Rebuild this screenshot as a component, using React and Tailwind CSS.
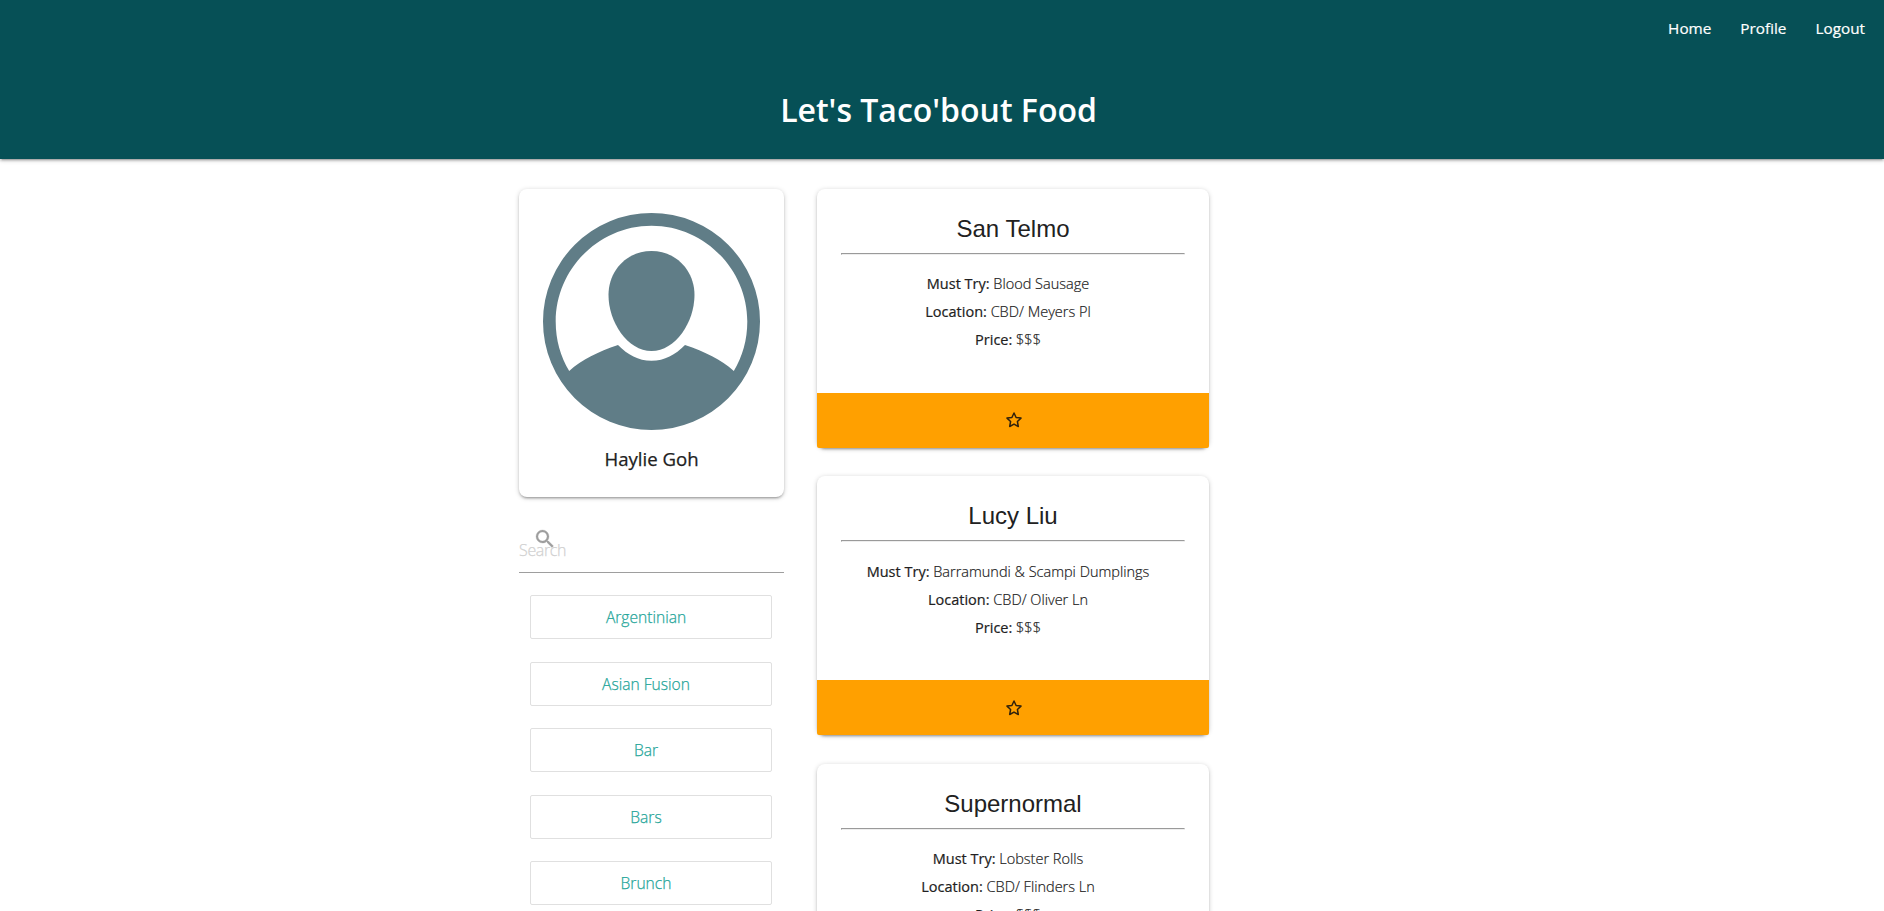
const CARD_SHADOW =
  "shadow-[0_2px_2px_0_rgba(0,0,0,0.14),0_3px_1px_-2px_rgba(0,0,0,0.12),0_1px_5px_0_rgba(0,0,0,0.2)]";

const cuisines = ["Argentinian", "Asian Fusion", "Bar", "Bars", "Brunch"];

const restaurants = [
  { name: "San Telmo", dish: "Blood Sausage", location: "CBD/ Meyers Pl", price: "$$$" },
  { name: "Lucy Liu", dish: "Barramundi & Scampi Dumplings", location: "CBD/ Oliver Ln", price: "$$$" },
  { name: "Supernormal", dish: "Lobster Rolls", location: "CBD/ Flinders Ln", price: "$$$" },
];

function Header() {
  return (
    <header className={`relative h-[159px] bg-[#065056] text-white ${CARD_SHADOW}`}>
      <nav className="flex h-14 justify-end gap-[29px] pr-[19px] text-[15.300px] font-medium leading-[56px] [-webkit-text-stroke:0.2px]">
        <a>Home</a>
        <a>Profile</a>
        <a>Logout</a>
      </nav>
      <h1 className="pr-[7px] pt-[30px] text-center text-[32px] font-semibold leading-[48px]">
        Let's Taco'bout Food
      </h1>
    </header>
  );
}

function Avatar() {
  return (
    <svg viewBox="0 0 217 217" className="block size-[217px]" fill="#607d87">
      <path
        fillRule="evenodd"
        d="M108.500 0A108.500 108.500 0 1 1 108.500 217A108.500 108.500 0 1 1 108.500 0ZM108.500 12.700C56 12.700 12.700 56 12.700 108.500C12.700 127 17.500 143.500 26.200 158C39 146.500 55 138.800 75 132C85 142 95 147.700 108.500 147.700C122 147.700 132 142 142 132C162 138.800 178 146.500 190.800 158C199.500 143.500 204.300 127 204.300 108.500C204.300 56 161 12.700 108.500 12.700Z"
      />
      <path d="M108.500 38C84.500 38 65.500 57 65.500 82C65.500 109 84.500 138 108.500 138S151.500 109 151.500 82C151.500 57 132.500 38 108.500 38Z" />
    </svg>
  );
}

function ProfileCard() {
  return (
    <section className={`flex h-[308px] flex-col items-center rounded-lg bg-white pt-6 ${CARD_SHADOW}`}>
      <Avatar />
      <p className="mt-[15px] text-[18.600px] font-medium leading-[28px] [-webkit-text-stroke:0.25px]">Haylie Goh</p>
    </section>
  );
}

function SearchField() {
  return (
    <div className="relative mt-[30px] h-[46px] border-b border-[#9e9e9e]">
      <svg viewBox="0 0 24 24" className="absolute left-[14px] top-0 size-6" fill="#9e9e9e" stroke="#9e9e9e" strokeWidth="0.300">
        <path d="M15.500 14h-.79l-.28-.27A6.471 6.471 0 0 0 16 9.500 6.500 6.500 0 1 0 9.500 16c1.610 0 3.090-.59 4.230-1.570l.27.28v.79l5 4.990L20.490 19l-4.990-5zm-6 0C7.010 14 5 11.990 5 9.500S7.010 5 9.500 5 14 7.010 14 9.500 11.990 14 9.500 14z" />
      </svg>
      <input
        placeholder="Search"
        className="relative block h-[45px] w-full bg-transparent pt-px text-[16px] font-light tracking-[-0.35px] outline-none [-webkit-text-stroke:0.25px_#d1d1d1] placeholder:text-[#d1d1d1]"
      />
    </div>
  );
}

function RestaurantCard({ name, dish, location, price }) {
  return (
    <article className={`flex h-[259px] shrink-0 flex-col rounded-lg bg-white ${CARD_SHADOW}`}>
      <div className="grow px-6 pt-6 text-center">
        <h2 className="font-['Liberation_Sans',sans-serif] text-[24px] leading-8">{name}</h2>
        <hr className="mt-2 h-[2px] border border-b-[#eeeeee] border-l-[#9a9a9a] border-r-[#eeeeee] border-t-[#9a9a9a]" />
        <div className="mt-[15.300px] pr-[10px] text-[14.500px] font-light leading-7 [-webkit-text-stroke:0.2px]">
          <p><b className="font-medium">Must Try:</b> {dish}</p>
          <p><b className="font-medium">Location:</b> {location}</p>
          <p><b className="font-medium">Price:</b> {price}</p>
        </div>
      </div>
      <div className="flex h-[55px] items-center justify-center rounded-b-[2px] bg-[#ffa000] pb-[0.400px] pl-px">
        <svg viewBox="0 0 16 16" className="size-4" fill="none" stroke="#30220c" strokeWidth="1.500" strokeLinejoin="round">
          <path d="M8 1L10.100 5.500L15 6.100L11.400 9.500L12.300 14.500L8 12.100L3.700 14.500L4.600 9.500L1 6.100L5.900 5.500Z" />
        </svg>
      </div>
    </article>
  );
}

export default function App() {
  return (
    <div className="h-screen overflow-hidden bg-white font-['Open_Sans',sans-serif] text-[#212121]">
      <Header />
      <main className="flex gap-[33px] pl-[519px] pt-[30px]">
        <aside className="w-[265px]">
          <ProfileCard />
          <SearchField />
          <ul className="mx-[11px] mt-[22px] flex w-[242px] flex-col gap-[22.500px]">
            {cuisines.map((c) => (
              <li
                key={c}
                className="h-11 rounded-[2px] border border-[#e0e0e0] pr-[10px] text-center text-[15.600px] font-light leading-[42px] text-[#26a69a] [-webkit-text-stroke:0.25px]"
              >
                {c}
              </li>
            ))}
          </ul>
        </aside>
        <div className="flex w-[392px] flex-col gap-[28.300px]">
          {restaurants.map((r) => (
            <RestaurantCard key={r.name} {...r} />
          ))}
        </div>
      </main>
    </div>
  );
}
